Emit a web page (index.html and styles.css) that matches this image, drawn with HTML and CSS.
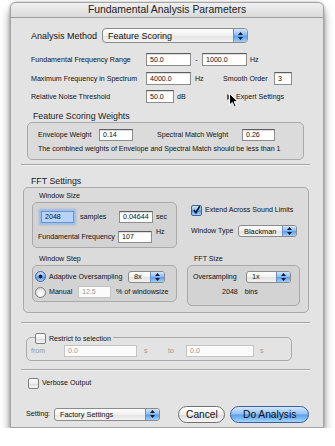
FILE: index.html
```html
<!DOCTYPE html>
<html lang="en">
<head>
    <meta charset="UTF-8">
    <meta name="viewport" content="width=device-width, initial-scale=1.0">
    <title>Fundamental Analysis Parameters</title>
    <link rel="stylesheet" href="styles.css">
</head>
<body>
    <div class="window">
        <div class="titlebar">Fundamental Analysis Parameters</div>
        <div class="content">
            <div class="row row-method">
                <span class="big w-method">Analysis Method</span>
                <div class="popup popup-big w-146">
                    <span class="popup-text">Feature Scoring</span>
                    <span class="cap"><svg width="5" height="8" viewBox="0 0 5 8"><path d="M2.5 0 L5 3 L0 3 Z M2.5 8 L5 5 L0 5 Z" fill="#0b1c3a"/></svg></span>
                </div>
            </div>

            <div class="row row-range">
                <span class="w-label">Fundamental Frequency Range</span>
                <span class="field w-45">50.0</span>
                <span class="dash">-</span>
                <span class="field w-45">1000.0</span>
                <span class="unit">Hz</span>
            </div>

            <div class="row row-max">
                <span class="w-label">Maximum Frequency in Spectrum</span>
                <span class="field w-45">4000.0</span>
                <span class="unit w-hz">Hz</span>
                <span class="w-smooth">Smooth Order</span>
                <span class="field w-18">3</span>
            </div>

            <div class="row row-noise">
                <span class="w-label">Relative Noise Threshold</span>
                <span class="field w-28">50.0</span>
                <span class="unit w-db">dB</span>
                <span class="disclosure"></span>
                <span>Expert Settings</span>
            </div>

            <div class="group-title title-weights">Feature Scoring Weights</div>
            <div class="group weights">
                <div class="row weights-row">
                    <span class="w-envelope">Envelope Weight</span>
                    <span class="field w-34">0.14</span>
                    <span class="w-spectral">Spectral Match Weight</span>
                    <span class="field w-33">0.26</span>
                </div>
                <div class="hint">The combined weights of Envelope and Spectral Match should be less than 1</div>
            </div>

            <div class="separator sep-1"></div>

            <div class="group-title title-fft">FFT Settings</div>
            <div class="group fft">
                <div class="fft-grid">
                    <div class="cell">
                        <div class="sub-title">Window Size</div>
                        <div class="group size-box">
                            <div class="row size-row1">
                                <span class="field focused w-33">2048</span>
                                <span class="w-samples">samples</span>
                                <span class="field w-34">0.04644</span>
                                <span class="unit">sec</span>
                            </div>
                            <div class="row size-row2">
                                <span class="w-fund">Fundamental Frequency</span>
                                <span class="field w-34">107</span>
                                <span class="unit raised">Hz</span>
                            </div>
                        </div>
                    </div>

                    <div class="cell right-top">
                        <div class="row extend-row">
                            <span class="checkbox checked"><svg width="10" height="10" viewBox="0 0 10 10"><path d="M2 5 L4.3 8 L8.6 0.8" fill="none" stroke="#0c1a33" stroke-width="1.8"/></svg></span>
                            <span>Extend Across Sound Limits</span>
                        </div>
                        <div class="row type-row">
                            <span class="w-type">Window Type</span>
                            <div class="popup w-59">
                                <span class="popup-text">Blackman</span>
                                <span class="cap"><svg width="5" height="8" viewBox="0 0 5 8"><path d="M2.5 0 L5 3 L0 3 Z M2.5 8 L5 5 L0 5 Z" fill="#0b1c3a"/></svg></span>
                            </div>
                        </div>
                    </div>

                    <div class="cell">
                        <div class="sub-title">Window Step</div>
                        <div class="group step-box">
                            <div class="row step-row1">
                                <span class="radio selected"></span>
                                <span class="w-adaptive">Adaptive Oversampling</span>
                                <div class="popup w-37">
                                    <span class="popup-text">8x</span>
                                    <span class="cap"><svg width="5" height="8" viewBox="0 0 5 8"><path d="M2.5 0 L5 3 L0 3 Z M2.5 8 L5 5 L0 5 Z" fill="#0b1c3a"/></svg></span>
                                </div>
                            </div>
                            <div class="row step-row2">
                                <span class="radio"></span>
                                <span class="w-manual">Manual</span>
                                <span class="field disabled w-33">12.5</span>
                                <span class="unit pct">% of windowsize</span>
                            </div>
                        </div>
                    </div>

                    <div class="cell">
                        <div class="sub-title">FFT Size</div>
                        <div class="group fftsize-box">
                            <div class="row fftsize-row1">
                                <span class="w-over">Oversampling</span>
                                <div class="popup w-45">
                                    <span class="popup-text">1x</span>
                                    <span class="cap"><svg width="5" height="8" viewBox="0 0 5 8"><path d="M2.5 0 L5 3 L0 3 Z M2.5 8 L5 5 L0 5 Z" fill="#0b1c3a"/></svg></span>
                                </div>
                            </div>
                            <div class="row fftsize-row2">
                                <span>2048</span>
                                <span class="bins">bins</span>
                            </div>
                        </div>
                    </div>
                </div>
            </div>

            <div class="separator sep-2"></div>

            <div class="group restrict">
                <div class="row restrict-head">
                    <span class="checkbox"></span>
                    <span>Restrict to selection</span>
                </div>
                <div class="row restrict-row">
                    <span class="w-from">from</span>
                    <span class="field disabled w-73">0.0</span>
                    <span class="w-s">s</span>
                    <span class="w-to">to</span>
                    <span class="field disabled w-68">0.0</span>
                    <span class="s-last">s</span>
                </div>
            </div>

            <div class="separator sep-3"></div>

            <div class="row verbose-row">
                <span class="checkbox"></span>
                <span>Verbose Output</span>
            </div>

            <div class="row bottom-row">
                <span class="w-setting">Setting:</span>
                <div class="popup popup-setting w-107">
                    <span class="popup-text">Factory Settings</span>
                    <span class="cap"><svg width="5" height="8" viewBox="0 0 5 8"><path d="M2.5 0 L5 3 L0 3 Z M2.5 8 L5 5 L0 5 Z" fill="#0b1c3a"/></svg></span>
                </div>
                <button class="btn btn-cancel">Cancel</button>
                <button class="btn btn-default">Do Analysis</button>
            </div>
        </div>

        <svg class="cursor" width="10" height="15" viewBox="0 0 10 15">
            <path d="M0.5 0.5 L0.5 12 L3.3 9.4 L5.4 14 L7.2 13.2 L5.1 8.7 L9 8.7 Z" fill="#000" stroke="#fff" stroke-width="1"/>
        </svg>
    </div>
</body>
</html>
```

FILE: styles.css
```css
body {
    margin: 0;
    background: #fff;
    font-family: "Liberation Sans", Arial, sans-serif;
    font-size: 7.1px;
    color: #111;
}
.window {
    position: relative;
    margin: 2px 0 0 10px;
    width: 312px;
    height: 424px;
    background: #e3e3e3;
    border: 1px solid #a4a4a4;
    border-radius: 6px 6px 2px 2px;
    box-shadow: 0 7px 10px rgba(0, 0, 0, 0.45), 0 0 3px rgba(0, 0, 0, 0.3);
}
.titlebar {
    height: 14px;
    line-height: 14px;
    text-align: center;
    font-size: 10.4px;
    color: #222;
    background: linear-gradient(#f0f0f0, #d9d9d9);
    border-bottom: 1px solid #9c9c9c;
    border-radius: 5px 5px 0 0;
}
.content {
    padding: 0 14px 0 12px;
}
.row {
    display: flex;
    align-items: center;
    white-space: nowrap;
}
.big {
    font-size: 9px;
}

/* widths */
.w-method { width: 71px; }
.w-label { width: 115px; }
.w-146 { width: 146px; }
.w-107 { width: 107px; }
.w-73 { width: 73px; }
.w-68 { width: 68px; }
.w-59 { width: 59px; }
.w-45 { width: 45px; }
.w-37 { width: 37px; }
.w-34 { width: 34px; }
.w-33 { width: 33px; }
.w-28 { width: 28px; }
.w-18 { width: 18px; }

/* text field */
.field {
    box-sizing: border-box;
    height: 12px;
    line-height: 11px;
    padding-left: 3px;
    background: #fff;
    border: 1px solid #8d8d8d;
    border-top-color: #5e5e5e;
    box-shadow: inset 0 1px 1px rgba(0, 0, 0, 0.15);
}
.field.focused {
    background: #b8d3f5;
    border-color: #6c95cf;
    box-shadow: 0 0 0 1px #9cc0ee, 0 0 2px 2px rgba(90, 150, 230, 0.45);
}
.field.disabled {
    color: #9a9a9a;
    border-color: #c4c4c4;
    box-shadow: none;
    background: #fbfbfb;
}
.unit {
    padding-left: 3px;
}

/* popup */
.popup {
    box-sizing: border-box;
    position: relative;
    height: 12px;
    display: flex;
    align-items: center;
    font-size: 7.4px;
    background: linear-gradient(#ffffff, #f1f1f1 50%, #e2e2e2 51%, #f3f3f3);
    border: 1px solid #8b8b8b;
    border-radius: 3px;
    overflow: hidden;
}
.popup-big {
    height: 15px;
    font-size: 9px;
    border-radius: 4px;
}
.popup-setting {
    height: 13px;
}
.popup-text {
    flex: 1;
    padding-left: 5px;
}
.cap {
    width: 13px;
    align-self: stretch;
    display: flex;
    align-items: center;
    justify-content: center;
    background: linear-gradient(#d3e5fa, #8cbcf2 48%, #5c9ce8 52%, #9fd0f8);
    border-left: 1px solid #6a8fc4;
}

/* rows at top */
.row-method {
    height: 15px;
    margin-top: 10px;
    padding-left: 8px;
}
.row-range {
    height: 13px;
    margin-top: 10px;
    padding-left: 8px;
}
.row-range .field, .row-max .field, .row-noise .field {
    height: 13px;
    line-height: 12px;
}
.dash {
    width: 11px;
    text-align: center;
}
.row-max {
    height: 13px;
    margin-top: 6px;
    padding-left: 8px;
}
.w-hz { width: 32px; padding-left: 4px; box-sizing: border-box; }
.w-smooth { width: 51px; }
.row-noise {
    height: 13px;
    margin-top: 5px;
    padding-left: 8px;
}
.w-db { width: 49px; box-sizing: border-box; }
.disclosure {
    width: 0;
    height: 0;
    margin: 0 4px 0 4px;
    border-top: 3px solid transparent;
    border-bottom: 3px solid transparent;
    border-left: 5px solid #5a5a5a;
}
.cursor {
    position: absolute;
    left: 218px;
    top: 90px;
}

/* group boxes */
.group-title {
    height: 12px;
    line-height: 12px;
    font-size: 8.8px;
    color: #1a1a1a;
}
.title-weights {
    margin-top: 7px;
    padding-left: 10px;
}
.group {
    border: 1px solid #a9a9a9;
    border-radius: 5px;
    background: rgba(0, 0, 0, 0.035);
}
.weights {
    margin: 0 5px 0 4px;
    padding: 6px 0 5px 10px;
}
.weights-row {
    height: 12px;
}
.w-envelope { width: 61px; }
.w-spectral { width: 85px; margin-left: 24px; }
.hint {
    margin-top: 3px;
    height: 10px;
    line-height: 10px;
}

.separator {
    height: 0;
    border-top: 1px solid #a6a6a6;
    border-bottom: 1px solid #f2f2f2;
    margin-left: -2px;
    margin-right: -1px;
}
.sep-1 { margin-top: 4px; }
.sep-2 { margin-top: 9px; }
.sep-3 { margin-top: 8px; }

.title-fft {
    margin-top: 9px;
    padding-left: 8px;
}
.fft {
    padding: 3px 7px 6px 8px;
}
.fft-grid {
    display: grid;
    grid-template-columns: 145px 113px;
    column-gap: 10px;
    row-gap: 6px;
}
.sub-title {
    height: 11px;
    line-height: 11px;
    padding-left: 7px;
}
.size-box {
    padding: 8px 0 4px 0;
}
.size-row1 {
    height: 12px;
    padding-left: 8px;
}
.w-samples {
    width: 45px;
    padding-left: 6px;
    box-sizing: border-box;
}
.size-row2 {
    height: 12px;
    margin-top: 8px;
    padding-left: 5px;
}
.w-fund { width: 80px; }
.raised {
    padding-left: 4px;
    align-self: flex-start;
    margin-top: -3px;
}
.right-top {
    padding-left: 4px;
}
.extend-row {
    height: 12px;
    margin-top: 13px;
}
.checkbox {
    box-sizing: border-box;
    width: 11px;
    height: 11px;
    margin-right: 3px;
    border: 1px solid #7e7e7e;
    border-radius: 2px;
    background: linear-gradient(#ffffff, #ececec 50%, #dadada 55%, #f8f8f8);
    display: flex;
    align-items: center;
    justify-content: center;
}
.checkbox.checked {
    border-color: #3f63a0;
    background: linear-gradient(#cfe3fa, #86b7ef 48%, #4f92e5 52%, #a7d3fa);
}
.type-row {
    height: 12px;
    margin-top: 9px;
}
.w-type { width: 47px; }

.step-box {
    padding: 4px 0 3px 2px;
}
.step-row1 {
    height: 13px;
}
.step-row2 {
    height: 12px;
    margin-top: 3px;
}
.radio {
    box-sizing: border-box;
    width: 11px;
    height: 11px;
    margin-right: 3px;
    border: 1px solid #7b7b7b;
    border-radius: 50%;
    background: radial-gradient(circle at 50% 70%, #ffffff, #e4e4e4 70%, #cfcfcf);
}
.radio.selected {
    border-color: #3f63a0;
    background: radial-gradient(circle, #0d1a30 0, #0d1a30 1.6px, transparent 2.2px), linear-gradient(#d0e4fb, #7cb1ee 50%, #4c8fe4 55%, #a6d2fa);
}
.w-adaptive { width: 79px; }
.w-manual { width: 29px; }
.pct { padding-left: 5px; }

.fftsize-box {
    height: 35px;
    padding: 4px 0 0 5px;
}
.fftsize-row1 {
    height: 13px;
}
.w-over { width: 53px; }
.fftsize-row2 {
    height: 12px;
    margin-top: 3px;
    padding-left: 29px;
}
.bins { padding-left: 7px; }

.restrict {
    margin: 13px 17px 0 3px;
    padding-bottom: 3px;
    background: transparent;
}
.restrict-head {
    height: 12px;
    margin: -7px 0 0 8px;
    align-self: flex-start;
    display: inline-flex;
    padding-right: 2px;
    background: #e3e3e3;
}
.restrict-row {
    height: 12px;
    margin-top: -1px;
    padding-left: 4px;
    color: #999;
}
.w-from { width: 33px; }
.w-s { width: 31px; padding-left: 7px; box-sizing: border-box; }
.w-to { width: 18px; }
.s-last { padding-left: 6px; }

.verbose-row {
    height: 12px;
    margin-top: 6px;
    padding-left: 5px;
}
.bottom-row {
    height: 18px;
    margin-top: 16px;
    padding-left: 3px;
}
.w-setting { width: 28px; }
.btn {
    box-sizing: border-box;
    height: 17px;
    padding: 0;
    font-family: "Liberation Sans", Arial, sans-serif;
    font-size: 10.2px;
    color: #111;
    border-radius: 9px;
}
.btn-cancel {
    width: 47px;
    margin-left: 18px;
    border: 1px solid #6f6f6f;
    background: linear-gradient(#ffffff, #f0f0f0 50%, #dcdcdc 55%, #f7f7f7);
}
.btn-default {
    width: 79px;
    margin-left: 5px;
    border: 1px solid #3a5f9e;
    background: linear-gradient(#d6e8fc, #90c0f4 48%, #5a9ded 52%, #a5d6fb);
}
```
